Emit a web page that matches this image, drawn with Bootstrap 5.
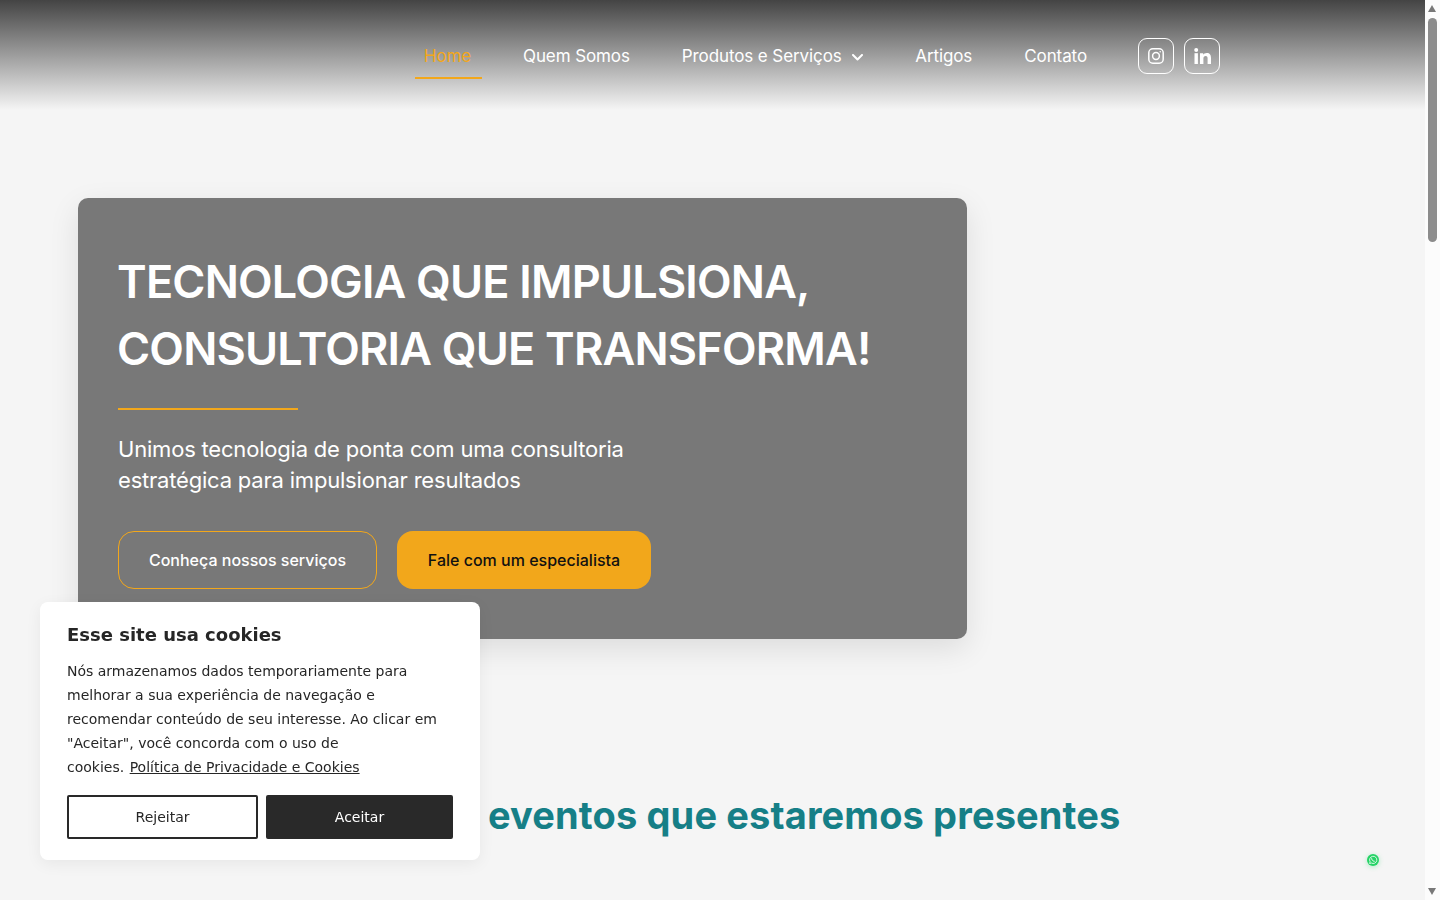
<!DOCTYPE html>
<html lang="pt-BR">
<head>
  <meta charset="UTF-8">
  <meta name="viewport" content="width=device-width, initial-scale=1.0">
  <title>Tecnologia e Consultoria</title>
  <link href="https://cdn.jsdelivr.net/npm/bootstrap@5.3.0/dist/css/bootstrap.min.css" rel="stylesheet">
  <style>
    body { background: #f5f5f5; font-family: "Inter", "Liberation Sans", sans-serif; padding-right: 15px; }

    /* Cabeçalho */
    .site-header { position: fixed; top: 0; left: 0; right: 15px; height: 110px; z-index: 10;
      background: linear-gradient(to bottom, #444444 0%, #f5f5f5 100%); padding: 38px 205px 0 0; }
    .menu-link { color: #fff; font-size: 17px; line-height: 36px; letter-spacing: -.1px; padding: 0 9px; height: 41px;
      text-decoration: none; border-bottom: 2px solid transparent; display: block; margin-right: 34px; }
    .menu-link.ativo { color: #f2a71b; border-bottom-color: #f2a71b; padding-right: 11px; margin-right: 32px; }
    .menu-link svg { margin-left: 6px; vertical-align: 1px; }
    .social-btn { width: 36px; height: 36px; border: 1px solid #fff; border-radius: 9px; color: #fff; }
    .social-list { margin-left: 8px; gap: 10px; }

    /* Hero */
    .hero-section { padding: 198px 0 0 78px; }
    .hero-box { width: 889px; height: 441px; background: #787878; border-radius: 10px; padding: 40px;
      box-shadow: 0 10px 30px rgba(0,0,0,.1); color: #fff; }
    .hero-title { font-size: 45px; line-height: 67px; font-weight: 600; letter-spacing: -.8px; margin: 10px 0 26px -1px; text-transform: uppercase; }
    .hero-line { width: 180px; height: 2px; background: #f2a71b; margin-bottom: 24px; }
    .hero-sub { font-size: 22px; line-height: 31px; letter-spacing: -.2px; margin-bottom: 35px; font-weight: 400; }
    .hero-btn { height: 58px; border-radius: 16px; font-size: 16px; font-weight: 500; display: flex; align-items: center; justify-content: center; text-decoration: none; }
    .hero-btn.contorno { width: 259px; border: 1px solid #f2a71b; color: #fff; }
    .hero-btn.cheio { width: 254px; background: #f2a71b; color: #111; }

    /* Eventos */
    .events-section { padding-top: 152px; min-height: 2800px; }
    .events-title { color: #167f87; font-size: 38px; font-weight: 700; line-height: 48px; letter-spacing: .13px; text-align: center; margin: 0; }

    /* Cookies */
    .cookie-box { position: fixed; left: 40px; bottom: 40px; width: 440px; height: 258px; background: #fff; border-radius: 8px;
      padding: 21px 27px; z-index: 20; box-shadow: 0 4px 16px rgba(0,0,0,.06);
      font-family: "DejaVu Sans", sans-serif; color: #262626; }
    .cookie-title { font-size: 18px; font-weight: 700; line-height: 24px; margin-bottom: 12px; }
    .cookie-text { font-size: 14px; line-height: 24px; margin-bottom: 16px; }
    .cookie-text a { color: #262626; margin-left: 1px; }
    .cookie-btn { height: 44px; font-size: 14px; border-radius: 2px; display: flex; align-items: center; justify-content: center; border: 2px solid #292929; }
    .cookie-btn.rejeitar { width: 191px; background: #fff; color: #262626; }
    .cookie-btn.aceitar { width: 187px; background: #292929; color: #fff; }

    /* WhatsApp */
    .zap-btn { position: fixed; left: 1367px; top: 854px; width: 12px; height: 12px; z-index: 15; border-radius: 50%;
      background: #25d366; box-shadow: 0 1px 5px rgba(37,211,102,.35); display: flex; }

    /* Barra de rolagem do navegador */
    .scroll-rail { position: fixed; top: 0; right: 0; bottom: 0; width: 15px; background: #fcfcfc; z-index: 30; }
    .scroll-thumb { position: absolute; top: 18px; left: 3px; width: 9px; height: 224px; background: #8c8c8c; border-radius: 5px; }
    .scroll-up, .scroll-down { position: absolute; left: 3px; width: 0; height: 0; border-left: 4.5px solid transparent; border-right: 4.5px solid transparent; }
    .scroll-up { top: 5px; border-bottom: 7px solid #787878; }
    .scroll-down { bottom: 5px; border-top: 7px solid #787878; }
  </style>
</head>
<body>
  <header class="site-header d-flex justify-content-end align-items-start">
    <a class="menu-link ativo" href="#">Home</a>
    <a class="menu-link" href="#">Quem Somos</a>
    <a class="menu-link" href="#">Produtos e Serviços
      <svg width="11" height="7" viewBox="0 0 11 7" fill="none" stroke="#fff" stroke-width="2" stroke-linecap="round" stroke-linejoin="round"><path d="M1 1l4.5 4.5L10 1"/></svg>
    </a>
    <a class="menu-link" href="#">Artigos</a>
    <a class="menu-link" href="#">Contato</a>
    <div class="social-list d-flex">
      <a class="social-btn d-flex align-items-center justify-content-center" href="#" aria-label="Instagram">
        <svg width="16" height="16" viewBox="0 0 16 16" fill="none" stroke="#fff" stroke-width="1.5"><rect x=".8" y=".8" width="14.4" height="14.4" rx="4"/><circle cx="8" cy="8" r="3.4"/><circle cx="12.2" cy="3.8" r=".8" fill="#fff" stroke="none"/></svg>
      </a>
      <a class="social-btn d-flex align-items-center justify-content-center" href="#" aria-label="LinkedIn">
        <svg width="17" height="17" viewBox="0 0 17 17" fill="#fff"><circle cx="2.2" cy="2" r="2"/><rect x=".5" y="5.2" width="3.4" height="10.8"/><path d="M6 5.2h3.2v1.5c.6-1 1.9-1.8 3.5-1.8 3.2 0 4.3 2 4.3 5V16h-3.4v-5.4c0-1.4-.4-2.6-1.9-2.6s-2.3 1.1-2.3 2.6V16H6z"/></svg>
      </a>
    </div>
  </header>

  <section class="hero-section">
    <div class="hero-box">
      <h1 class="hero-title">Tecnologia que impulsiona,<br>consultoria que transforma!</h1>
      <div class="hero-line"></div>
      <p class="hero-sub">Unimos tecnologia de ponta com uma consultoria<br>estratégica para impulsionar resultados</p>
      <div class="d-flex gap-3">
        <a class="hero-btn contorno" href="#">Conheça nossos serviços</a>
        <a class="hero-btn cheio ms-1" href="#">Fale com um especialista</a>
      </div>
    </div>
  </section>

  <section class="events-section">
    <h2 class="events-title">Próximos eventos que estaremos presentes</h2>
  </section>

  <div class="cookie-box">
    <div class="cookie-title">Esse site usa cookies</div>
    <p class="cookie-text">Nós armazenamos dados temporariamente para melhorar a sua experiência de navegação e recomendar conteúdo de seu interesse. Ao clicar em "Aceitar", você concorda com o uso de<br>cookies. <a href="#">Política de Privacidade e Cookies</a></p>
    <div class="d-flex gap-2">
      <button class="cookie-btn rejeitar" type="button">Rejeitar</button>
      <button class="cookie-btn aceitar" type="button">Aceitar</button>
    </div>
  </div>

  <a class="zap-btn" href="#" aria-label="WhatsApp">
    <svg width="12" height="12" viewBox="0 0 12 12" fill="none" stroke="#fff" stroke-width=".8"><path d="M2.6 9.5l.5-1.8A3.6 3.6 0 1 1 4.4 9z"/><path d="M4.6 4.3c0 1.6 1.4 3 3 3" stroke-width="1"/></svg>
  </a>

  <div class="scroll-rail" aria-hidden="true">
    <div class="scroll-up"></div>
    <div class="scroll-thumb"></div>
    <div class="scroll-down"></div>
  </div>

  <script src="https://cdn.jsdelivr.net/npm/bootstrap@5.3.0/dist/js/bootstrap.bundle.min.js"></script>
</body>
</html>
